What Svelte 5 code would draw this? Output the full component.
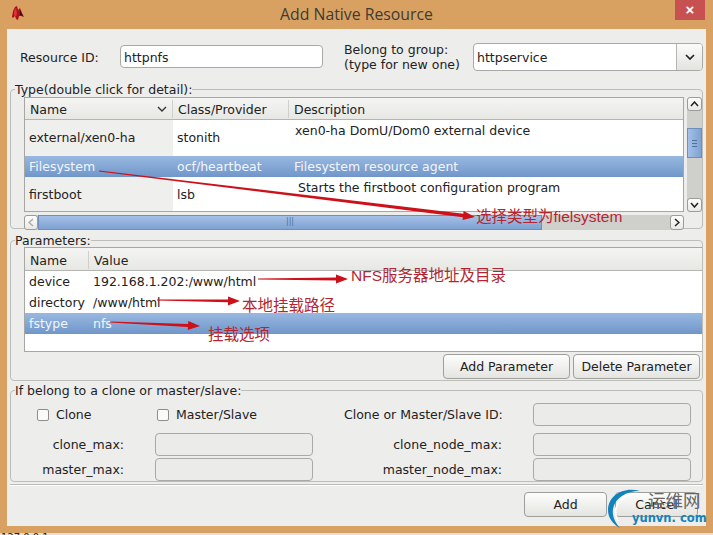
<script>
    const typeRows = [
        { name: 'external/xen0-ha', cls: 'stonith', desc: 'xen0-ha DomU/Dom0 external device', kind: 'tall' },
        { name: 'Filesystem', cls: 'ocf/heartbeat', desc: 'Filesystem resource agent', kind: 'selected' },
        { name: 'firstboot', cls: 'lsb', desc: 'Starts the firstboot configuration program', kind: 'last' }
    ];

    const paramRows = [
        { name: 'device', value: '192.168.1.202:/www/html' },
        { name: 'directory', value: '/www/html' },
        { name: 'fstype', value: 'nfs', selected: true }
    ];

    // hand drawn looking arrows: thin at the tail, thick near the head
    const arrows = [
        { x1: 99, y1: 171, x2: 475, y2: 217, w: 3.6 },
        { x1: 258, y1: 279, x2: 348, y2: 279, w: 2.8 },
        { x1: 157, y1: 300, x2: 240, y2: 301, w: 2.8 },
        { x1: 110, y1: 322, x2: 200, y2: 326, w: 3 }
    ];

    const arrowPoints = (a) => {
        const len = Math.hypot(a.x2 - a.x1, a.y2 - a.y1);
        const ux = (a.x2 - a.x1) / len;
        const uy = (a.y2 - a.y1) / len;
        const bx = a.x2 - ux * 12;
        const by = a.y2 - uy * 12;
        const nx = -uy;
        const ny = ux;
        const p = (x, y) => `${x.toFixed(1)},${y.toFixed(1)}`;
        return [
            p(a.x1 + nx * 0.6, a.y1 + ny * 0.6),
            p(bx + nx * a.w / 2, by + ny * a.w / 2),
            p(bx + nx * 4.5, by + ny * 4.5),
            p(a.x2, a.y2),
            p(bx - nx * 4.5, by - ny * 4.5),
            p(bx - nx * a.w / 2, by - ny * a.w / 2),
            p(a.x1 - nx * 0.6, a.y1 - ny * 0.6)
        ].join(' ');
    };

    const notes = [
        { text: '选择类型为fielsystem', x: 476, y: 207 },
        { text: 'NFS服务器地址及目录', x: 351, y: 266 },
        { text: '本地挂载路径', x: 242, y: 296 },
        { text: '挂载选项', x: 208, y: 325 }
    ];
</script>

<div class="screen">
    <div class="frame">
        <header class="titlebar">
            <svg class="appicon" width="14" height="16" viewBox="0 0 14 16">
                <path d="M1 12 L2 6 L4 2 L6 1 L7 5 L9 3 L11 8 L13 12 L10 11 L8 11 L7 15 L5 14 L4 11 L2 13 Z" fill="#a8121a" />
                <path d="M3 6 L5 3 L6 8 L5 12 L3 10 Z" fill="#e0303a" />
                <path d="M9 5 L12 11 L9 10 Z" fill="#3a1210" />
            </svg>
            <span class="title">Add Native Resource</span>
            <span class="close">×</span>
        </header>

        <div class="client">
            <div class="toprow">
                <label class="idlabel" for="rid">Resource ID:</label>
                <div class="entry identry" id="rid">httpnfs</div>
                <div class="grouplabel">Belong to group:<br />(type for new one)</div>
                <div class="combo">
                    <span class="combotext">httpservice</span>
                    <span class="combobtn">
                        <svg width="10" height="6" viewBox="0 0 10 6"><path d="M1 1 L5 5 L9 1" fill="none" stroke="#222" stroke-width="1.7" /></svg>
                    </span>
                </div>
            </div>

            <fieldset class="group typegroup">
                <legend>Type(double click for detail):</legend>
                <div class="typebody">
                    <div class="typetable">
                        <div class="thead">
                            <div class="th c1">Name
                                <svg width="10" height="6" viewBox="0 0 10 6"><path d="M1 1 L5 5 L9 1" fill="none" stroke="#333" stroke-width="1.4" /></svg>
                            </div>
                            <div class="th c2">Class/Provider</div>
                            <div class="th c3">Description</div>
                        </div>
                        {#each typeRows as row}
                            <div class="trow {row.kind}">
                                <div class="td c1">{row.name}</div>
                                <div class="td c2">{row.cls}</div>
                                <div class="td c3">{row.desc}</div>
                            </div>
                        {/each}
                    </div>
                    <div class="vscroll">
                        <span class="sbtn">
                            <svg width="9" height="6" viewBox="0 0 9 6"><path d="M1 5 L4.5 1 L8 5" fill="none" stroke="#222" stroke-width="1.5" /></svg>
                        </span>
                        <span class="vgap"></span>
                        <span class="vthumb"><i></i><i></i><i></i></span>
                        <span class="vrest"></span>
                        <span class="sbtn">
                            <svg width="9" height="6" viewBox="0 0 9 6"><path d="M1 1 L4.5 5 L8 1" fill="none" stroke="#222" stroke-width="1.5" /></svg>
                        </span>
                    </div>
                </div>
                <div class="hscroll">
                    <span class="sbtn small">
                        <svg width="6" height="9" viewBox="0 0 6 9"><path d="M5 1 L1 4.5 L5 8" fill="none" stroke="#aaa" stroke-width="1.5" /></svg>
                    </span>
                    <span class="hthumb">|||</span>
                    <span class="hrest"></span>
                    <span class="sbtn small">
                        <svg width="6" height="9" viewBox="0 0 6 9"><path d="M1 1 L5 4.5 L1 8" fill="none" stroke="#222" stroke-width="1.5" /></svg>
                    </span>
                </div>
            </fieldset>

            <fieldset class="group paramgroup">
                <legend>Parameters:</legend>
                <div class="paramtable">
                    <div class="thead phead">
                        <div class="th p1">Name</div>
                        <div class="th p2">Value</div>
                    </div>
                    {#each paramRows as row}
                        <div class="prow" class:selected={row.selected}>
                            <div class="td p1">{row.name}</div>
                            <div class="td p2">{row.value}</div>
                        </div>
                    {/each}
                </div>
                <div class="parambtns">
                    <button class="btn">Add Parameter</button>
                    <button class="btn">Delete Parameter</button>
                </div>
            </fieldset>

            <fieldset class="group clonegroup">
                <legend>If belong to a clone or master/slave:</legend>
                <div class="clonegrid">
                    <div class="checks">
                        <span class="check"><i></i>Clone</span>
                        <span class="check"><i></i>Master/Slave</span>
                    </div>
                    <span class="rlabel">Clone or Master/Slave ID:</span>
                    <div class="entry off"></div>

                    <span class="rlabel">clone_max:</span>
                    <div class="entry off"></div>
                    <span class="rlabel">clone_node_max:</span>
                    <div class="entry off"></div>

                    <span class="rlabel">master_max:</span>
                    <div class="entry off"></div>
                    <span class="rlabel">master_node_max:</span>
                    <div class="entry off"></div>
                </div>
            </fieldset>

            <div class="separator"></div>

            <div class="actions">
                <button class="btn act">Add</button>
                <button class="btn act">Cancel</button>
            </div>
        </div>
    </div>
    <div class="under">127.0.0.1</div>

    <svg class="marks" width="713" height="535" viewBox="0 0 713 535">
        {#each arrows as a}
            <polygon points={arrowPoints(a)} fill="#cc111a" />
        {/each}
    </svg>

    {#each notes as n}
        <span class="note" style="left: {n.x}px; top: {n.y}px">{n.text}</span>
    {/each}

    <div class="logo">
        <svg width="62" height="42" viewBox="0 0 62 42">
            <path d="M33 3 C16 -2 1 8 1 22 C1 30 6 36 13 40 C8 34 5 28 6 21 C8 10 19 3 33 3 Z" fill="#1283bd" />
            <path d="M33 6 C22 4 12 10 9 20 C8 25 9 29 11 33" fill="none" stroke="#fff" stroke-width="1.6" />
        </svg>
        <span class="logocn">运维网</span>
        <span class="logoen">yunvn. com</span>
    </div>
</div>

<style>
    :global(body) {
        margin: 0;
    }

    .screen {
        position: relative;
        width: 713px;
        height: 535px;
        overflow: hidden;
        background: #e6e0d6;
        font-family: "DejaVu Sans", sans-serif;
        font-size: 12.5px;
        color: #222;
    }

    .frame {
        height: 533px;
        box-sizing: border-box;
        background: #d8a162;
        padding: 0 7px 7px 7px;
        display: flex;
        flex-direction: column;
    }

    .titlebar {
        position: relative;
        height: 29px;
        flex: none;
        text-align: center;
    }

    .appicon {
        position: absolute;
        left: 4px;
        top: 5px;
    }

    .title {
        display: block;
        padding-top: 4px;
        font-family: "Open Sans", sans-serif;
        font-size: 15.8px;
        line-height: 20px;
        color: #3f3a34;
    }

    .close {
        position: absolute;
        right: 1px;
        top: 0;
        width: 30px;
        height: 20px;
        background: #c75050;
        color: #fff;
        font: bold 15px/19px "Liberation Sans", sans-serif;
    }

    .client {
        flex: 1;
        background: #ededeb;
        padding: 0 3px;
        min-height: 0;
        display: flex;
        flex-direction: column;
    }

    .toprow {
        display: flex;
        align-items: center;
        height: 53px;
        flex: none;
        padding: 1px 2px 0 10px;
    }

    .idlabel {
        width: 100px;
        flex: none;
        padding-top: 2px;
    }

    .entry {
        box-sizing: border-box;
        background: #fff;
        border: 1px solid #a9a9a5;
        border-radius: 4px;
        line-height: 23px;
        padding-left: 3px;
    }

    .identry {
        width: 203px;
        height: 23px;
        flex: none;
    }

    .grouplabel {
        margin-left: 21px;
        width: 129px;
        line-height: 15px;
        flex: none;
    }

    .combo {
        display: flex;
        width: 230px;
        height: 28px;
        box-sizing: border-box;
        background: #fff;
        border: 1px solid #a9a9a5;
        border-radius: 4px;
        flex: none;
        overflow: hidden;
    }

    .combotext {
        flex: 1;
        line-height: 28px;
        padding-left: 3px;
    }

    .combobtn {
        width: 25px;
        border-left: 1px solid #b5b5b1;
        background: linear-gradient(#fbfbfa, #e3e3e0);
        display: flex;
        align-items: center;
        justify-content: center;
    }

    .group {
        margin: 0;
        padding: 0;
        border: 1px solid #bdbdb9;
        border-radius: 4px;
        min-width: 0;
        flex: none;
        box-sizing: border-box;
    }

    legend {
        padding: 0;
        margin-left: 4px;
        line-height: 13px;
    }

    .typegroup legend,
    .paramgroup legend {
        margin-left: -9px;
    }

    .typegroup {
        height: 146px;
        padding: 0 0 0 13px;
    }

    .typebody {
        display: flex;
        gap: 3px;
        height: 115px;
        margin-top: 1px;
    }

    .typetable {
        width: 660px;
        flex: none;
        box-sizing: border-box;
        border: 1px solid #a6a6a2;
        background: #fff;
    }

    .thead {
        display: flex;
        height: 22px;
        box-sizing: border-box;
        background: linear-gradient(#f4f4f2, #e7e7e4);
        border-bottom: 1px solid #b4b4b0;
    }

    .th {
        display: flex;
        align-items: center;
        justify-content: space-between;
        box-sizing: border-box;
        padding: 0 5px;
        border-right: 1px solid #cfcfcb;
        height: 18px;
        margin-top: 2px;
    }

    .th:last-child {
        border-right: 0;
    }

    .phead .th {
        margin-top: 3px;
    }

    .c1 {
        width: 148px;
        flex: none;
    }

    .c2 {
        width: 116px;
        flex: none;
    }

    .c3 {
        flex: 1;
    }

    .trow {
        display: flex;
    }

    .td {
        box-sizing: border-box;
        padding: 0 4px;
    }

    .trow .c1 {
        background: #efefed;
        padding-left: 4px;
    }

    .trow.tall {
        height: 36px;
    }

    .trow.tall .td {
        line-height: 36px;
    }

    .trow.tall .c3 {
        line-height: 20px;
        padding-top: 1px;
        padding-left: 6px;
    }

    .trow.selected {
        height: 21px;
        color: #f2f6fb;
        background: linear-gradient(#98b8e0, #7096c9);
    }

    .trow.selected .td {
        background: none;
        line-height: 22px;
    }

    .trow.selected .c3 {
        padding-left: 5px;
    }

    .trow.last {
        height: 34px;
    }

    .trow.last .td {
        line-height: 36px;
    }

    .trow.last .c3 {
        line-height: 22px;
        padding-left: 9px;
    }

    .vscroll {
        width: 15px;
        flex: none;
        display: flex;
        flex-direction: column;
        background: #cfcfcc;
        border-radius: 4px;
    }

    .sbtn {
        flex: none;
        box-sizing: border-box;
        display: flex;
        align-items: center;
        justify-content: center;
        height: 14px;
        background: linear-gradient(#fdfdfc, #e9e9e6);
        border: 1px solid #9c9c98;
        border-radius: 3px;
    }

    .vgap {
        height: 17px;
        flex: none;
    }

    .vthumb {
        height: 30px;
        flex: none;
        box-sizing: border-box;
        border: 1px solid #6f8fba;
        background: linear-gradient(90deg, #a4c0e6, #7ea2d3);
        display: flex;
        flex-direction: column;
        align-items: center;
        justify-content: center;
        gap: 2px;
    }

    .vthumb i {
        width: 5px;
        height: 1px;
        background: #4f6f9c;
    }

    .vrest {
        flex: 1;
    }

    .hscroll {
        display: flex;
        width: 660px;
        height: 15px;
        margin-top: 3px;
        background: #cfcfcc;
        border-radius: 4px;
    }

    .sbtn.small {
        width: 14px;
        height: 15px;
    }

    .hthumb {
        width: 504px;
        flex: none;
        box-sizing: border-box;
        background: linear-gradient(#a4c0e6, #7ea2d3);
        border: 1px solid #6f8fba;
        color: #4f6f9c;
        font-size: 8px;
        line-height: 12px;
        text-align: center;
    }

    .hrest {
        flex: 1;
    }

    .paramgroup {
        height: 147px;
        margin-top: 5px;
        padding: 0 0 0 13px;
    }

    .paramtable {
        width: 678px;
        height: 105px;
        box-sizing: border-box;
        border: 1px solid #a6a6a2;
        border-right: 0;
        background: #fff;
    }

    .phead {
        height: 23px;
    }

    .p1 {
        width: 64px;
        flex: none;
    }

    .p2 {
        flex: 1;
    }

    .prow {
        display: flex;
        height: 21px;
        line-height: 21px;
    }

    .prow.selected {
        color: #f2f6fb;
        background: linear-gradient(#98b8e0, #7096c9);
    }

    .parambtns {
        display: flex;
        justify-content: flex-end;
        gap: 3px;
        margin: 2px 2px 0 0;
    }

    .btn {
        box-sizing: border-box;
        height: 25px;
        width: 127px;
        padding: 0;
        font: inherit;
        color: #222;
        background: linear-gradient(#fdfdfc, #e4e4e1);
        border: 1px solid #9e9e9a;
        border-radius: 4px;
    }

    .clonegroup {
        height: 98px;
        margin-top: 3px;
    }

    .clonegrid {
        display: grid;
        grid-template-columns: 113px 158px 158px 158px;
        column-gap: 31px;
        grid-template-rows: 28px 23px 23px;
        row-gap: 2px;
        margin-top: 6px;
        white-space: nowrap;
    }

    .clonegrid .entry {
        height: 23px;
        background: #ebebe9;
    }

    .checks {
        grid-column: 1 / 3;
        display: flex;
        padding-left: 26px;
        height: 23px;
    }

    .check {
        display: flex;
        align-items: center;
        gap: 7px;
        width: 120px;
    }

    .check i {
        width: 12px;
        height: 12px;
        box-sizing: border-box;
        background: #fafafa;
        border: 1px solid #8e8e8a;
        border-radius: 2px;
    }

    .rlabel {
        text-align: right;
        line-height: 23px;
    }

    .separator {
        height: 1px;
        margin: 2px 0 0;
        flex: none;
        background: #bdbdb9;
        box-shadow: 0 1px 0 #fff;
    }

    .actions {
        display: flex;
        justify-content: flex-end;
        gap: 8px;
        margin: 7px 5px 0 0;
    }

    .btn.act {
        width: 83px;
    }

    .under {
        height: 2px;
        line-height: 10px;
        font-size: 10px;
        padding-left: 1px;
        color: #222;
    }

    .marks {
        position: absolute;
        left: 0;
        top: 0;
        pointer-events: none;
    }

    .note {
        position: absolute;
        font-family: "Liberation Sans", "Noto Sans CJK SC", sans-serif;
        font-size: 15.5px;
        line-height: 20px;
        color: #b52530;
        white-space: nowrap;
    }

    .logo {
        position: absolute;
        left: 607px;
        top: 488px;
        width: 100px;
        height: 44px;
    }

    .logo svg {
        position: absolute;
        left: 0;
        top: 0;
    }

    .logocn {
        position: absolute;
        left: 41px;
        top: 0;
        font-family: "Noto Sans CJK SC", sans-serif;
        font-size: 17.5px;
        line-height: 24px;
        color: #666;
        white-space: nowrap;
    }

    .logoen {
        position: absolute;
        left: 25px;
        top: 22px;
        font-family: "DejaVu Sans", sans-serif;
        font-weight: bold;
        font-size: 11.5px;
        line-height: 16px;
        color: #1283bd;
        white-space: nowrap;
    }
</style>
